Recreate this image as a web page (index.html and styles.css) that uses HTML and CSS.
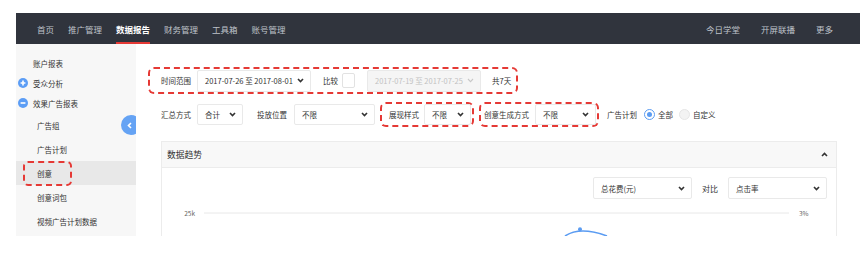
FILE: index.html
```html
<!DOCTYPE html>
<html lang="zh-CN">
<head>
  <meta charset="UTF-8" />
  <title>数据报告 – 创意</title>
  <link rel="stylesheet" href="styles.css">
</head>
<body>
<div class="app">
  <nav class="topnav">
    <div class="nav-main">
      <a href="#">首页</a>
      <a href="#">推广管理</a>
      <a href="#" class="active">数据报告</a>
      <a href="#">财务管理</a>
      <a href="#">工具箱</a>
      <a href="#">账号管理</a>
    </div>
    <div class="nav-extra">
      <a href="#">今日学堂</a>
      <a href="#">开屏联播</a>
      <a href="#">更多</a>
    </div>
  </nav>

  <div class="layout">
    <aside class="sidebar">
      <div class="side-item plain">账户报表</div>
      <div class="side-item">
        <span class="side-icon">
          <svg width="10" height="10" viewBox="0 0 10 10"><path d="M5 2.6v4.8M2.6 5h4.8" stroke="#fff" stroke-width="1.6"/></svg>
        </span>受众分析
      </div>
      <div class="side-item">
        <span class="side-icon">
          <svg width="10" height="10" viewBox="0 0 10 10"><path d="M2.6 5h4.8" stroke="#fff" stroke-width="1.6"/></svg>
        </span>效果广告报表
      </div>
      <div class="side-sub">广告组</div>
      <div class="side-sub">广告计划</div>
      <div class="side-sub current">创意<span class="mark"></span></div>
      <div class="side-sub">创意词包</div>
      <div class="side-sub">视频广告计划数据</div>

      <div class="collapse">
        <svg width="5" height="7" viewBox="0 0 5 7"><polyline points="4,1 1.5,3.5 4,6" fill="none" stroke="#fff" stroke-width="1.6"/></svg>
      </div>
    </aside>

    <main class="content">
      <div class="filter-row first">
        <div class="dashed range-box">
          <span class="label">时间范围</span>
          <div class="select date-select">
            <span>2017-07-26 至 2017-08-01</span>
            <svg class="chev" width="7" height="5" viewBox="0 0 7 5"><polyline points="1,1 3.5,3.6 6,1"/></svg>
          </div>
          <span class="label compare">比较</span>
          <span class="checkbox"></span>
          <div class="select date-select disabled">
            <span>2017-07-19 至 2017-07-25</span>
            <svg class="chev" width="7" height="5" viewBox="0 0 7 5"><polyline points="1,1 3.5,3.6 6,1"/></svg>
          </div>
          <span class="label total">共7天</span>
        </div>
      </div>

      <div class="filter-row second">
        <span class="label">汇总方式</span>
        <div class="select sum-select">
          <span>合计</span>
          <svg class="chev" width="7" height="5" viewBox="0 0 7 5"><polyline points="1,1 3.5,3.6 6,1"/></svg>
        </div>
        <span class="label place-label">投放位置</span>
        <div class="select place-select">
          <span>不限</span>
          <svg class="chev" width="7" height="5" viewBox="0 0 7 5"><polyline points="1,1 3.5,3.6 6,1"/></svg>
        </div>
        <div class="dashed style-box">
          <span class="label">展现样式</span>
          <div class="select style-select">
            <span>不限</span>
            <svg class="chev" width="7" height="5" viewBox="0 0 7 5"><polyline points="1,1 3.5,3.6 6,1"/></svg>
          </div>
        </div>
        <div class="dashed gen-box">
          <span class="label">创意生成方式</span>
          <div class="select gen-select">
            <span>不限</span>
            <svg class="chev" width="7" height="5" viewBox="0 0 7 5"><polyline points="1,1 3.5,3.6 6,1"/></svg>
          </div>
        </div>
        <span class="label plan-label">广告计划</span>
        <label class="radio checked"><span class="dot"></span>全部</label>
        <label class="radio"><span class="dot"></span>自定义</label>
      </div>

      <section class="panel">
        <div class="panel-head">
          <span>数据趋势</span>
          <svg class="chev" width="7" height="5" viewBox="0 0 7 5"><polyline points="1,4 3.5,1.4 6,4"/></svg>
        </div>
        <div class="chart-tools">
          <div class="select metric-select">
            <span>总花费(元)</span>
            <svg class="chev" width="7" height="5" viewBox="0 0 7 5"><polyline points="1,1 3.5,3.6 6,1"/></svg>
          </div>
          <span class="vs">对比</span>
          <div class="select metric-select">
            <span>点击率</span>
            <svg class="chev" width="7" height="5" viewBox="0 0 7 5"><polyline points="1,1 3.5,3.6 6,1"/></svg>
          </div>
        </div>
        <svg class="chart" width="674" height="40" viewBox="0 0 674 40">
          <line x1="42" y1="14" x2="627" y2="14" stroke="#e8e8e8" stroke-width="1"/>
          <text x="33" y="16.5" text-anchor="end" class="axis">25k</text>
          <text x="637" y="16.5" class="axis">3%</text>
          <path d="M403 37 Q418 27 445 37" fill="none" stroke="#5b9cf2" stroke-width="1.6"/>
          <circle cx="418" cy="30.3" r="2" fill="#5b9cf2"/>
        </svg>
      </section>
    </main>
  </div>
</div>
</body>
</html>
```

FILE: styles.css
```css
body {
  margin: 0;
  background-color: #ffffff;
  font-family: "Noto Sans CJK SC", "Noto Sans", sans-serif;
  color: #333;
}

.app {
  margin: 13px 5px 0 16px;
  height: 223px;
  overflow: hidden;
  display: flex;
  flex-direction: column;
}

/* top navigation */
.topnav {
  flex: none;
  height: 31px;
  background-color: #30343d;
  display: flex;
  padding: 0 27px 0 21px;
}

.nav-main,
.nav-extra {
  display: flex;
  gap: 14px;
}

.nav-extra {
  margin-left: auto;
  gap: 21px;
}

.topnav a {
  position: relative;
  display: flex;
  align-items: center;
  color: #bfc3ca;
  font-size: 8.5px;
  text-decoration: none;
}

.topnav a.active {
  color: #ffffff;
  font-weight: bold;
}

.topnav a.active::after {
  content: "";
  position: absolute;
  left: 0;
  right: 0;
  bottom: 0;
  height: 2px;
  background-color: #e53935;
}

.layout {
  flex: 1;
  display: flex;
}

/* sidebar */
.sidebar {
  position: relative;
  width: 120px;
  flex: none;
  background-color: #f7f7f7;
  padding-top: 9px;
  overflow: hidden;
  font-size: 7.5px;
}

.side-item {
  height: 20px;
  display: flex;
  align-items: center;
  padding-left: 2px;
}

.side-item.plain {
  padding-left: 17px;
}

.side-icon {
  width: 10px;
  height: 10px;
  border-radius: 50%;
  background-color: #5c9df5;
  margin-right: 5px;
  display: flex;
}

.side-sub {
  position: relative;
  height: 24px;
  display: flex;
  align-items: center;
  padding-left: 21px;
}

.side-sub.current {
  background-color: #e8e8e8;
}

.mark {
  position: absolute;
  left: 7px;
  top: 0;
  width: 49px;
  height: 25px;
  box-sizing: border-box;
  border: 2px dashed #e53935;
  border-radius: 5px;
}

.collapse {
  position: absolute;
  top: 71px;
  right: -5px;
  width: 20px;
  height: 20px;
  border-radius: 50%;
  background-color: #65a3f4;
  display: flex;
  align-items: center;
}

.collapse svg {
  margin-left: 6px;
}

/* filters */
.content {
  flex: 1;
  padding: 23px 23px 0 25px;
  font-size: 7.5px;
}

.filter-row {
  display: flex;
  align-items: center;
}

.filter-row.first {
  margin-left: -13px;
}

.filter-row.second {
  margin-top: 8px;
  height: 25px;
}

.dashed {
  display: flex;
  align-items: center;
  box-sizing: border-box;
  border: 2px dashed #e53935;
  border-radius: 6px;
}

.range-box {
  height: 27px;
  padding: 0 5px 0 11px;
}

.select {
  display: flex;
  align-items: center;
  justify-content: space-between;
  box-sizing: border-box;
  height: 21px;
  padding: 0 6px 0 7px;
  border: 1px solid #e9e9e9;
  border-radius: 2px;
  background-color: #ffffff;
  color: #333;
}

.chev {
  fill: none;
  stroke: #333;
  stroke-width: 1.6;
}

.date-select {
  width: 114px;
  height: 22px;
  margin-left: 6px;
}

.date-select.disabled {
  background-color: #f5f5f5;
  color: #c2c2c2;
  margin-left: 12px;
}

.date-select.disabled .chev {
  stroke: #c8c8c8;
  stroke-width: 1.1;
}

.compare {
  margin-left: 12px;
}

.checkbox {
  width: 11px;
  height: 13px;
  margin-left: 4px;
  border: 1px solid #e2e2e2;
  border-radius: 2px;
  background-color: #fff;
}

.total {
  margin-left: 11px;
}

.sum-select {
  width: 46px;
  margin-left: 6px;
}

.place-label {
  margin-left: 14px;
}

.place-select {
  width: 81px;
  margin-left: 7px;
}

.style-box {
  height: 25px;
  margin-left: 5px;
  padding: 0 1px 0 7px;
}

.style-select {
  width: 47px;
  margin-left: 5px;
}

.gen-box {
  height: 25px;
  margin-left: 5px;
  padding: 0 1px 0 3px;
}

.gen-select {
  width: 61px;
  margin-left: 6px;
}

.plan-label {
  margin-left: 8px;
}

.radio {
  display: flex;
  align-items: center;
  margin-left: 7px;
}

.radio + .radio {
  margin-left: 6px;
}

.radio .dot {
  width: 11px;
  height: 11px;
  box-sizing: border-box;
  border-radius: 50%;
  border: 1px solid #e6e6e6;
  background-color: #f3f3f3;
  margin-right: 3px;
  display: flex;
  align-items: center;
  justify-content: center;
}

.radio.checked .dot {
  border-color: #5b9cf2;
  background-color: #fff;
}

.radio.checked .dot::after {
  content: "";
  width: 5px;
  height: 5px;
  border-radius: 50%;
  background-color: #5b9cf2;
}

/* trend panel */
.panel {
  margin-top: 14px;
  border: 1px solid #ececec;
  height: 120px;
}

.panel-head {
  height: 25px;
  display: flex;
  align-items: center;
  justify-content: space-between;
  padding: 0 8px 0 5px;
  background-color: #f8f8f8;
  border-bottom: 1px solid #ececec;
  font-size: 8.75px;
}

.chart-tools {
  display: flex;
  justify-content: flex-end;
  align-items: center;
  padding: 9px 9px 0;
}

.metric-select {
  width: 99px;
  height: 22px;
}

.vs {
  margin: 0 10px;
  font-size: 8px;
}

.chart {
  display: block;
}

.chart .axis {
  font-size: 6.5px;
  fill: #666;
}
```
